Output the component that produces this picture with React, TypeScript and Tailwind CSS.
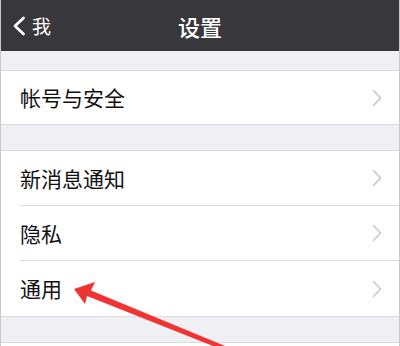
import React from "react";

const font = { fontFamily: '"Noto Sans CJK SC", "Noto Sans", sans-serif' };

function Chevron() {
  return (
    <svg width="10" height="18" viewBox="0 0 10 18" fill="none" aria-hidden="true">
      <path d="M1.5 1.5 L8.5 9 L1.5 16.5" stroke="#c7c7cc" strokeWidth="1.5" strokeLinecap="round" strokeLinejoin="round" />
    </svg>
  );
}

function Row({ label, last }: { label: string; last?: boolean }) {
  return (
    <div className="flex h-[55px] items-stretch bg-white pl-[19px]">
      <div className={`flex flex-1 items-center justify-between pr-[17px] ${last ? "" : "border-b border-[#dcdce0]"}`}>
        <span className="text-[21px] leading-none text-[#111]">{label}</span>
        <Chevron />
      </div>
    </div>
  );
}

export default function App() {
  return (
    <div className="relative h-[346px] w-[400px] overflow-hidden border-x border-[#c9c9cc] bg-[#efeff4]" style={font}>
      <header className="grid h-[51px] grid-cols-[1fr_auto_1fr] items-center bg-[#38373c] text-white">
        <div className="flex items-center pl-[11px]">
          <svg width="14" height="20" viewBox="0 0 14 20" fill="none" aria-hidden="true">
            <path d="M11.5 2 L3 10 L11.5 18" stroke="white" strokeWidth="2.8" strokeLinecap="round" strokeLinejoin="round" />
          </svg>
          <span className="ml-[6px] text-[19px] leading-none">我</span>
        </div>
        <h1 className="text-[22px] font-medium leading-none">设置</h1>
        <div />
      </header>

      <div className="h-[19px]" />
      <div className="border-y border-[#dcdce0]">
        <div className="flex h-[53px] items-center justify-between bg-white pl-[19px] pr-[17px]">
          <span className="text-[21px] leading-none text-[#111]">帐号与安全</span>
          <Chevron />
        </div>
      </div>

      <div className="h-[25px]" />
      <div className="border-y border-[#dcdce0]">
        <Row label="新消息通知" />
        <Row label="隐私" />
        <Row label="通用" last />
      </div>

      <div className="h-[25px]" />
      <div className="h-[10px] border-t border-[#dcdce0] bg-white" />

      <svg className="pointer-events-none absolute left-0 top-0" width="400" height="346" viewBox="0 0 400 346" aria-hidden="true">
        <path d="M73 289 L94 282 L90 290.5 L224 346 L212 346 L86 296 L84 304 Z" fill="#f03434" />
      </svg>
    </div>
  );
}
